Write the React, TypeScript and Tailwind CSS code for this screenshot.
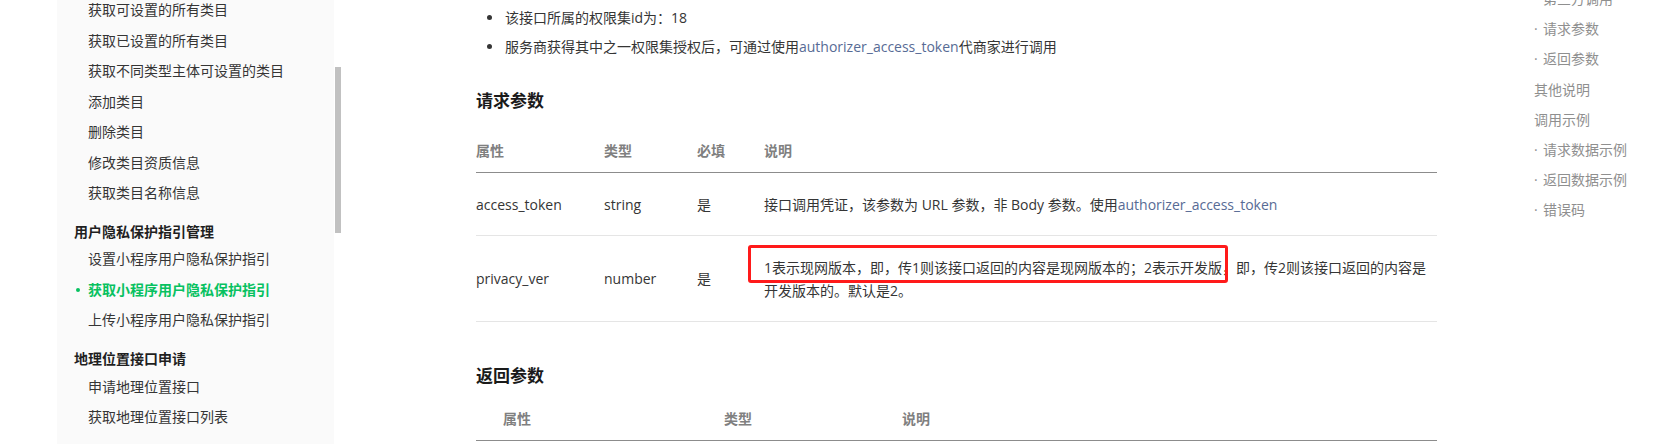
const FONT = "font-['Open_Sans','Noto_Sans_CJK_SC',sans-serif]";

const GROUP_ONE = [
  "获取可设置的所有类目",
  "获取已设置的所有类目",
  "获取不同类型主体可设置的类目",
  "添加类目",
  "删除类目",
  "修改类目资质信息",
  "获取类目名称信息",
];

const PRIVACY_ITEMS = [
  { label: "设置小程序用户隐私保护指引", active: false },
  { label: "获取小程序用户隐私保护指引", active: true },
  { label: "上传小程序用户隐私保护指引", active: false },
];

const GEO_ITEMS = ["申请地理位置接口", "获取地理位置接口列表"];

const TOC = [
  { label: "第三方调用", sub: true },
  { label: "请求参数", sub: true },
  { label: "返回参数", sub: true },
  { label: "其他说明", sub: false },
  { label: "调用示例", sub: false },
  { label: "请求数据示例", sub: true },
  { label: "返回数据示例", sub: true },
  { label: "错误码", sub: true },
];

const LINK = "text-[#576b95]";

const Sidebar = () => {
  return (
    <aside className="flex shrink-0">
      <div className="w-[277px] h-[444px] bg-[#fafafa] text-[14px] text-[#353535] overflow-hidden">
        <div className="mt-[-5px]">
          {GROUP_ONE.map((label) => (
            <div key={label} className="h-[30.5px] leading-[30.5px] pl-[31px] whitespace-nowrap">
              {label}
            </div>
          ))}
        </div>

        {/* privacy group */}
        <div className="mt-[11.5px] h-[24px] leading-[24px] pl-[17px] font-bold text-[#1f1f1f]">
          用户隐私保护指引管理
        </div>
        {PRIVACY_ITEMS.map((item) =>
          item.active ? (
            <div
              key={item.label}
              className="h-[30.5px] flex items-center pl-[19px] gap-[8px] font-bold text-[#07c160]"
            >
              <span className="w-[4px] h-[4px] rounded-full bg-[#07c160]" />
              <span>{item.label}</span>
            </div>
          ) : (
            <div key={item.label} className="h-[30.5px] leading-[30.5px] pl-[31px]">
              {item.label}
            </div>
          )
        )}

        {/* geo group */}
        <div className="mt-[11.5px] h-[24px] leading-[24px] pl-[17px] font-bold text-[#1f1f1f]">
          地理位置接口申请
        </div>
        <div className="mt-[1px]">
          {GEO_ITEMS.map((label) => (
            <div key={label} className="h-[29.5px] leading-[29.5px] pl-[31px]">
              {label}
            </div>
          ))}
        </div>
      </div>
      {/* scrollbar thumb */}
      <div className="w-[6px] ml-[1px]">
        <div className="mt-[67px] h-[166px] bg-[#c1c1c1]" />
      </div>
    </aside>
  );
};

const HeadCell = ({ children, className = "" }: { children: React.ReactNode; className?: string }) => (
  <div className={`font-semibold text-[#808080] ${className}`}>{children}</div>
);

const Content = () => {
  return (
    <main className="w-[961px] ml-[135px] shrink-0 text-[14px] text-[#353535]">
      <ul className="pt-[2.5px]">
        <li className="flex items-center h-[29px] pl-[11px] gap-[13px]">
          <span className="w-[5px] h-[5px] rounded-full bg-[#353535]" />
          <span>该接口所属的权限集id为：18</span>
        </li>
        <li className="flex items-center h-[29px] pl-[11px] gap-[13px]">
          <span className="w-[5px] h-[5px] rounded-full bg-[#353535]" />
          <span>
            服务商获得其中之一权限集授权后，可通过使用
            <span className={LINK}>authorizer_access_token</span>
            代商家进行调用
          </span>
        </li>
      </ul>

      <h2 className="mt-[28.5px] h-[24px] leading-[24px] text-[17px] font-bold text-[#1a1a1a]">
        请求参数
      </h2>

      {/* request table */}
      <div className="grid grid-cols-[128px_93px_67px_1fr] leading-[23px] pt-[25.5px] pb-[10.5px] border-b border-[#8c8c8c]">
        <HeadCell>属性</HeadCell>
        <HeadCell>类型</HeadCell>
        <HeadCell>必填</HeadCell>
        <HeadCell>说明</HeadCell>
      </div>
      <div className="grid grid-cols-[128px_93px_67px_1fr] leading-[23px] py-[19.5px] border-b border-[#e5e5e5]">
        <div>access_token</div>
        <div>string</div>
        <div>是</div>
        <div>
          接口调用凭证，该参数为 URL 参数，非 Body 参数。使用
          <span className={LINK}>authorizer_access_token</span>
        </div>
      </div>
      <div className="relative grid grid-cols-[128px_93px_67px_1fr] items-center leading-[23px] py-[19.5px] border-b border-[#e5e5e5]">
        <div>privacy_ver</div>
        <div>number</div>
        <div>是</div>
        <div className="whitespace-nowrap">
          1表示现网版本，即，传1则该接口返回的内容是现网版本的；2表示开发版，即，传2则该接口返回的内容是
          <br />
          开发版本的。默认是2。
        </div>
        {/* annotation box */}
        <div className="absolute left-[272px] top-[9px] w-[480px] h-[38px] border-[3px] border-[#ff1a1a] rounded-[3px]" />
      </div>

      <h2 className="mt-[42px] h-[24px] leading-[24px] text-[17px] font-bold text-[#1a1a1a]">
        返回参数
      </h2>

      {/* response table */}
      <div className="grid grid-cols-[221px_178px_1fr] leading-[23px] pt-[18.5px] pb-[10.5px] border-b border-[#8c8c8c]">
        <HeadCell className="pl-[27px]">属性</HeadCell>
        <HeadCell className="pl-[27px]">类型</HeadCell>
        <HeadCell className="pl-[27px]">说明</HeadCell>
      </div>
    </main>
  );
};

const Toc = () => {
  return (
    <nav className="ml-[97px] mt-[-16px] text-[14px] text-[#8f8f8f] whitespace-nowrap">
      {TOC.map((item) => (
        <div key={item.label} className="h-[30.2px] leading-[30.2px]">
          {item.sub ? (
            <span>
              <span className="inline-block w-[9px]">·</span>
              {item.label}
            </span>
          ) : (
            item.label
          )}
        </div>
      ))}
    </nav>
  );
};

export default function App() {
  return (
    <div className={`flex w-[1653px] h-[444px] overflow-hidden bg-white ${FONT}`}>
      <div className="w-[57px] shrink-0" />
      <Sidebar />
      <Content />
      <Toc />
    </div>
  );
}
